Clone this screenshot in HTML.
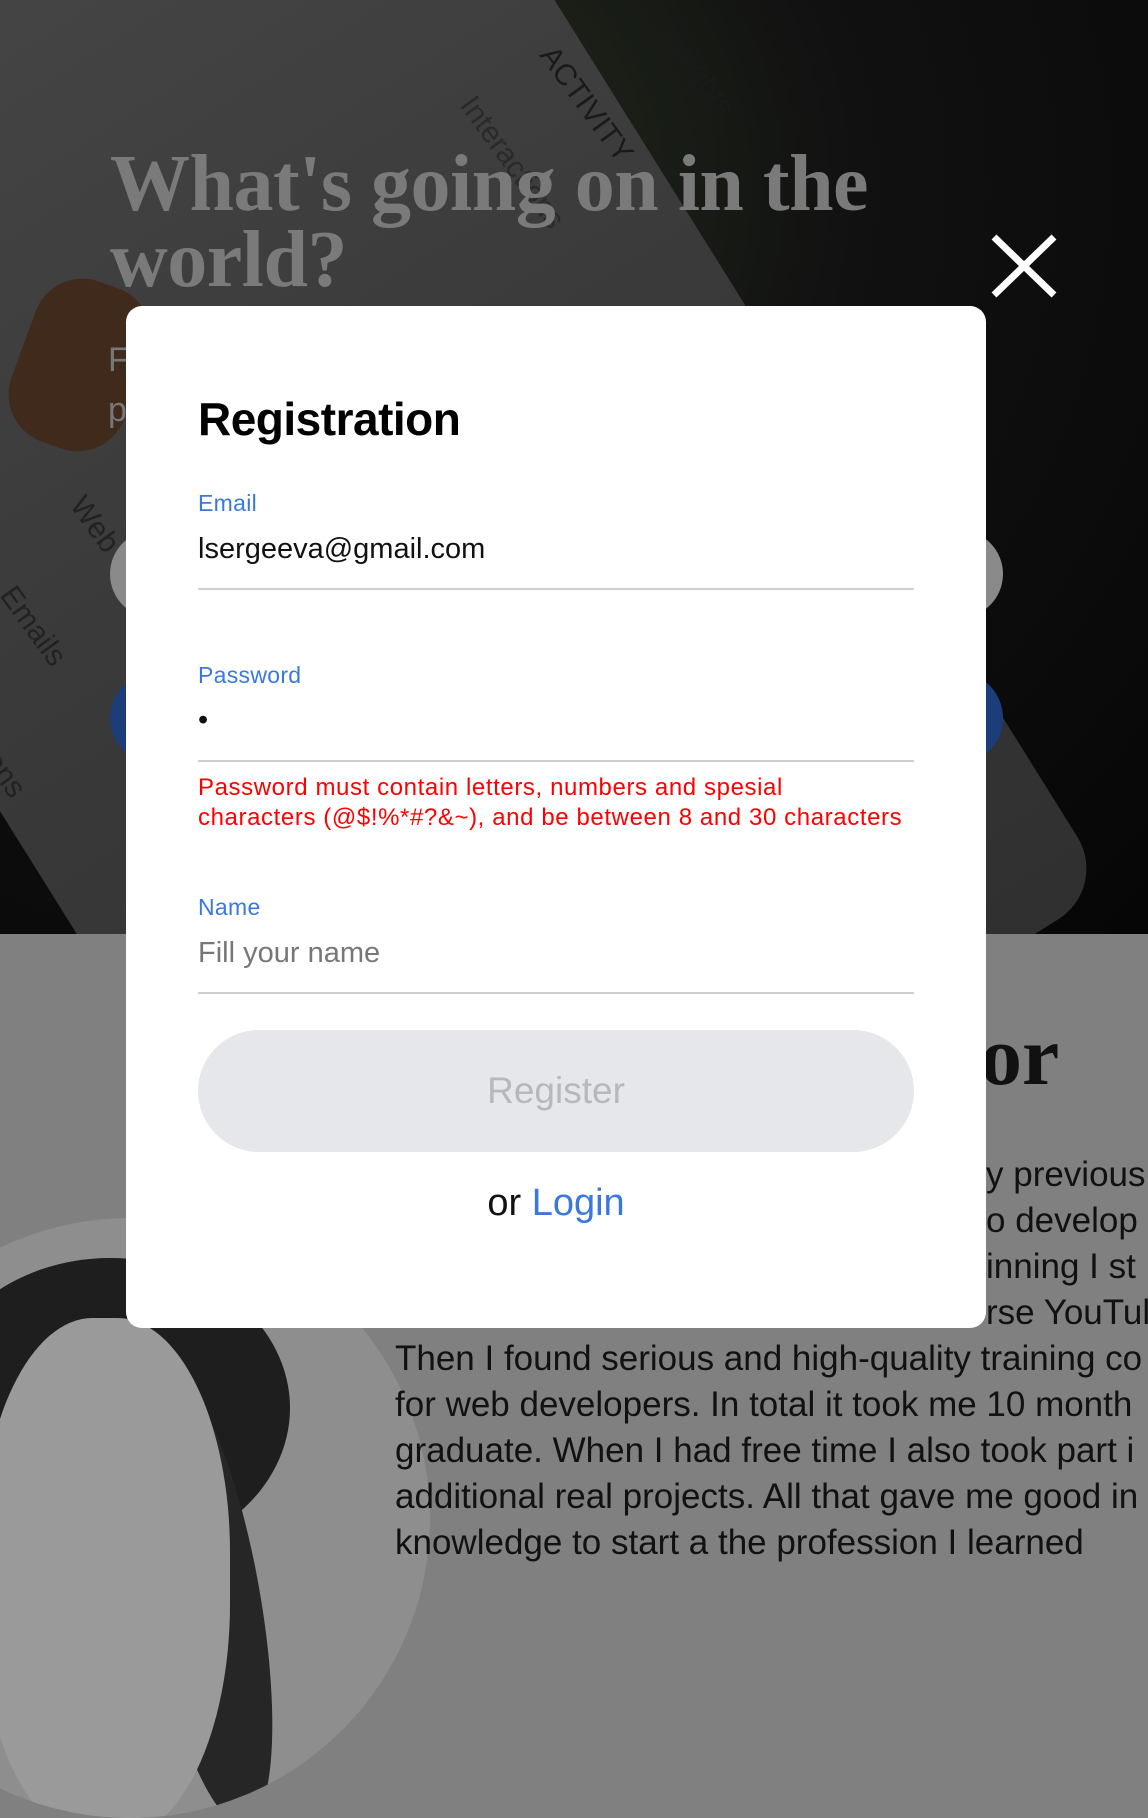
<!DOCTYPE html>
<html><head><meta charset="utf-8"><style>
*{margin:0;padding:0;box-sizing:border-box}
body{width:1148px;height:1536px;overflow:hidden;position:relative;background:#808080;font-family:"Liberation Sans",sans-serif}
.top{position:absolute;left:0;top:0;width:1148px;height:934px;background:radial-gradient(ellipse at 30% 20%,#26301f 0%,#111 45%,#060606 100%);overflow:hidden}
.phone{position:absolute;left:-120px;top:-260px;width:900px;height:1500px;background:linear-gradient(180deg,#474747,#3a3a3a 50%,#303030);transform:rotate(-32deg);transform-origin:50% 50%;border-radius:60px;}
.hand{position:absolute;left:20px;top:280px;width:120px;height:170px;background:#3f2a1c;border-radius:50px;transform:rotate(20deg)}
.ph{position:absolute;color:#222;font-size:30px;transform:rotate(54deg);transform-origin:0 0;}
.h1{position:absolute;left:110px;top:146px;font-family:"Liberation Serif",serif;font-weight:bold;font-size:80px;line-height:76px;color:#7a7a7a;letter-spacing:-0.5px}
.pillg{position:absolute;left:110px;top:530px;width:893px;height:88px;border-radius:44px;background:#8a8a8a}
.pillb{position:absolute;left:110px;top:672px;width:893px;height:92px;border-radius:46px;background:#1d3d7a}
.close{position:absolute;left:990px;top:233px}
.modal{position:absolute;left:126px;top:306px;width:860px;height:1022px;background:#fff;border-radius:16px}
.m{position:absolute;left:72px;width:716px;white-space:nowrap}
.title{top:86px;font-size:46px;font-weight:bold;color:#000;letter-spacing:-0.5px}
.lbl{font-size:23px;color:#3a78e0;letter-spacing:0.3px}
.val{font-size:29px;color:#111}
.line{height:2px;background:#cfcfcf}
.err{font-size:24px;color:#f00;line-height:30px;letter-spacing:0.6px}
.btn{top:724px;height:122px;border-radius:61px;background:#e6e7eb;color:#b7b8bc;font-size:37px;text-align:center;line-height:122px}
.or{top:876px;text-align:center;font-size:38px;color:#111}
.or span{color:#3a78e0}
.big{position:absolute;left:980px;top:1008px;font-family:"Liberation Serif",serif;font-weight:bold;font-size:84px;color:#111}
.para{position:absolute;font-size:35px;line-height:46px;color:#111;white-space:nowrap}
.photo{position:absolute;left:-170px;top:1218px;width:600px;height:600px;border-radius:50%;background:#8e8e8e;overflow:hidden}
</style></head><body>
<div class="top">
 <div class="phone"></div>
 <div class="hand"></div>
 <div class="ph" style="left:680px;top:20px;color:#1a1a1a">Insights</div>
 <div class="ph" style="left:560px;top:40px;color:#1a1a1a">ACTIVITY</div>
 <div class="ph" style="left:480px;top:90px;color:#2a2a2a">Interactions</div>
 <div class="ph" style="left:90px;top:490px">Web</div>
 <div class="ph" style="left:20px;top:580px">Emails</div>
 <div class="ph" style="left:0px;top:740px">ions</div>
 <div class="h1">What's going on in the<br>world?</div>
 <div style="position:absolute;left:108px;top:335px;font-size:34px;line-height:50px;color:#777">F<br>p</div>
 <div class="pillg"></div>
 <div class="pillb"></div>
</div>
<svg class="close" width="68" height="66" viewBox="0 0 68 66"><path d="M4 4L64 62M64 4L4 62" stroke="#fff" stroke-width="7"/></svg>
<div class="photo">
 <div style="position:absolute;left:100px;top:40px;width:360px;height:300px;border-radius:50%;background:#1e1e1e"></div>
 <div style="position:absolute;left:320px;top:150px;width:110px;height:460px;border-radius:50%;background:#262626;transform:rotate(-10deg)"></div>
 <div style="position:absolute;left:150px;top:100px;width:250px;height:520px;border-radius:45%;background:#9a9a9a"></div>
</div>
<div class="big">or</div>
<div class="para" style="left:986px;top:1152px">y previous<br>o develop<br>inning I st<br>rse YouTul</div>
<div class="para" style="left:395px;top:1336px">Then I found serious and high-quality training co<br>for web developers. In total it took me 10 month<br>graduate. When I had free time I also took part i<br>additional real projects. All that gave me good in<br>knowledge to start a the profession I learned</div>
<div class="modal">
 <div class="m title">Registration</div>
 <div class="m lbl" style="top:184px">Email</div>
 <div class="m val" style="top:227px">lsergeeva@gmail.com</div>
 <div class="m line" style="top:282px"></div>
 <div class="m lbl" style="top:356px">Password</div>
 <div class="m val" style="top:398px">•</div>
 <div class="m line" style="top:454px"></div>
 <div class="m err" style="top:467px">Password must contain letters, numbers and spesial<br>characters (@$!%*#?&amp;~), and be between 8 and 30 characters</div>
 <div class="m lbl" style="top:588px">Name</div>
 <div class="m val" style="top:631px;color:#777">Fill your name</div>
 <div class="m line" style="top:686px"></div>
 <div class="m btn">Register</div>
 <div class="m or">or <span>Login</span></div>
</div>
</body></html>
